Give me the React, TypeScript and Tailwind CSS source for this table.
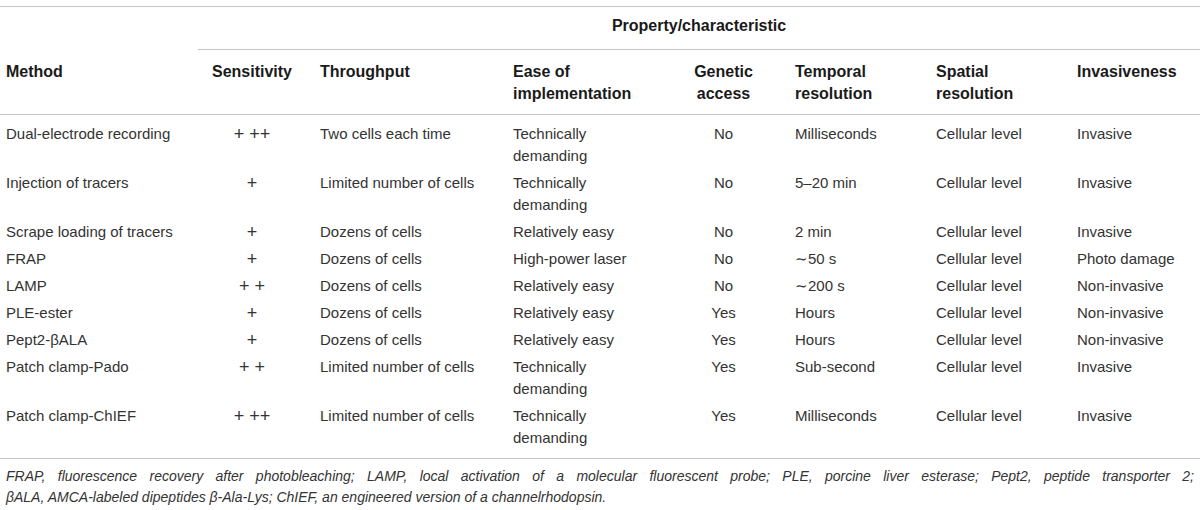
type Row = {
  method: string;
  sens: string;
  throughput: string;
  ease: string[];
  genetic: string;
  temporal: string;
  spatial: string;
  invasive: string;
};

const rows: Row[] = [
  { method: "Dual-electrode recording", sens: "+ ++", throughput: "Two cells each time", ease: ["Technically", "demanding"], genetic: "No", temporal: "Milliseconds", spatial: "Cellular level", invasive: "Invasive" },
  { method: "Injection of tracers", sens: "+", throughput: "Limited number of cells", ease: ["Technically", "demanding"], genetic: "No", temporal: "5–20 min", spatial: "Cellular level", invasive: "Invasive" },
  { method: "Scrape loading of tracers", sens: "+", throughput: "Dozens of cells", ease: ["Relatively easy"], genetic: "No", temporal: "2 min", spatial: "Cellular level", invasive: "Invasive" },
  { method: "FRAP", sens: "+", throughput: "Dozens of cells", ease: ["High-power laser"], genetic: "No", temporal: "∼50 s", spatial: "Cellular level", invasive: "Photo damage" },
  { method: "LAMP", sens: "+ +", throughput: "Dozens of cells", ease: ["Relatively easy"], genetic: "No", temporal: "∼200 s", spatial: "Cellular level", invasive: "Non-invasive" },
  { method: "PLE-ester", sens: "+", throughput: "Dozens of cells", ease: ["Relatively easy"], genetic: "Yes", temporal: "Hours", spatial: "Cellular level", invasive: "Non-invasive" },
  { method: "Pept2-βALA", sens: "+", throughput: "Dozens of cells", ease: ["Relatively easy"], genetic: "Yes", temporal: "Hours", spatial: "Cellular level", invasive: "Non-invasive" },
  { method: "Patch clamp-Pado", sens: "+ +", throughput: "Limited number of cells", ease: ["Technically", "demanding"], genetic: "Yes", temporal: "Sub-second", spatial: "Cellular level", invasive: "Invasive" },
  { method: "Patch clamp-ChIEF", sens: "+ ++", throughput: "Limited number of cells", ease: ["Technically", "demanding"], genetic: "Yes", temporal: "Milliseconds", spatial: "Cellular level", invasive: "Invasive" },
];

export default function App() {
  return (
    <div className="w-[1200px] h-[510px] bg-white pt-[6px] font-['Liberation_Sans',Arial,sans-serif] text-[15px] text-[#333]">
      <table className="w-full table-fixed border-collapse border-t border-[#c4c4c4]">
        <colgroup>
          <col className="w-[198px]" />
          <col className="w-[116px]" />
          <col className="w-[193px]" />
          <col className="w-[173px]" />
          <col className="w-[109px]" />
          <col className="w-[141px]" />
          <col className="w-[141px]" />
          <col className="w-[129px]" />
        </colgroup>
        <thead className="font-bold text-[16px] text-[#1a1a1a] leading-[22px]">
          <tr>
            <th className="pt-[8px] pb-[12px]" />
            <th colSpan={7} className="pt-[8px] pb-[12px] text-center border-b border-[#c4c4c4]">
              Property/characteristic
            </th>
          </tr>
          <tr className="border-b border-[#c4c4c4] align-top text-left">
            <th className="pl-[6px] pt-[11px] pb-[9px] text-left">Method</th>
            <th className="pl-[6px] pr-[14px] pt-[11px] pb-[9px] text-center">Sensitivity</th>
            <th className="pl-[6px] pt-[11px] pb-[9px] text-left">Throughput</th>
            <th className="pl-[6px] pt-[11px] pb-[9px] text-left">
              Ease of
              <br />
              implementation
            </th>
            <th className="pl-[6px] pr-[28px] pt-[11px] pb-[9px] text-center">
              Genetic
              <br />
              access
            </th>
            <th className="pl-[6px] pt-[11px] pb-[9px] text-left">
              Temporal
              <br />
              resolution
            </th>
            <th className="pl-[6px] pt-[11px] pb-[9px] text-left">
              Spatial
              <br />
              resolution
            </th>
            <th className="pl-[6px] pt-[11px] pb-[9px] text-left">Invasiveness</th>
          </tr>
        </thead>
        <tbody className="leading-[22px] border-b border-[#c4c4c4]">
          {rows.map((r, i) => {
            const py =
              i === 0 ? "pt-[8px] pb-[2.5px]" : i === rows.length - 1 ? "pt-[2.5px] pb-[9px]" : "py-[2.5px]";
            return (
              <tr key={r.method} className="align-top">
                <td className={`pl-[6px] ${py}`}>{r.method}</td>
                <td className={`pl-[6px] pr-[14px] text-center text-[18px] ${py}`}>{r.sens}</td>
                <td className={`pl-[6px] ${py}`}>{r.throughput}</td>
                <td className={`pl-[6px] ${py}`}>
                  {r.ease.map((e) => (
                    <div key={e}>{e}</div>
                  ))}
                </td>
                <td className={`pl-[6px] pr-[28px] text-center ${py}`}>{r.genetic}</td>
                <td className={`pl-[6px] ${py}`}>{r.temporal}</td>
                <td className={`pl-[6px] ${py}`}>{r.spatial}</td>
                <td className={`pl-[6px] ${py}`}>{r.invasive}</td>
              </tr>
            );
          })}
        </tbody>
      </table>

      {/* Footnote */}
      <div className="px-[6px] pt-[7px] italic text-[14px] leading-[21px]">
        <div className="text-justify [text-align-last:justify]">
          FRAP, fluorescence recovery after photobleaching; LAMP, local activation of a molecular fluorescent probe; PLE,
          porcine liver esterase; Pept2, peptide transporter 2;
        </div>
        <div>βALA, AMCA-labeled dipeptides β-Ala-Lys; ChIEF, an engineered version of a channelrhodopsin.</div>
      </div>
    </div>
  );
}
